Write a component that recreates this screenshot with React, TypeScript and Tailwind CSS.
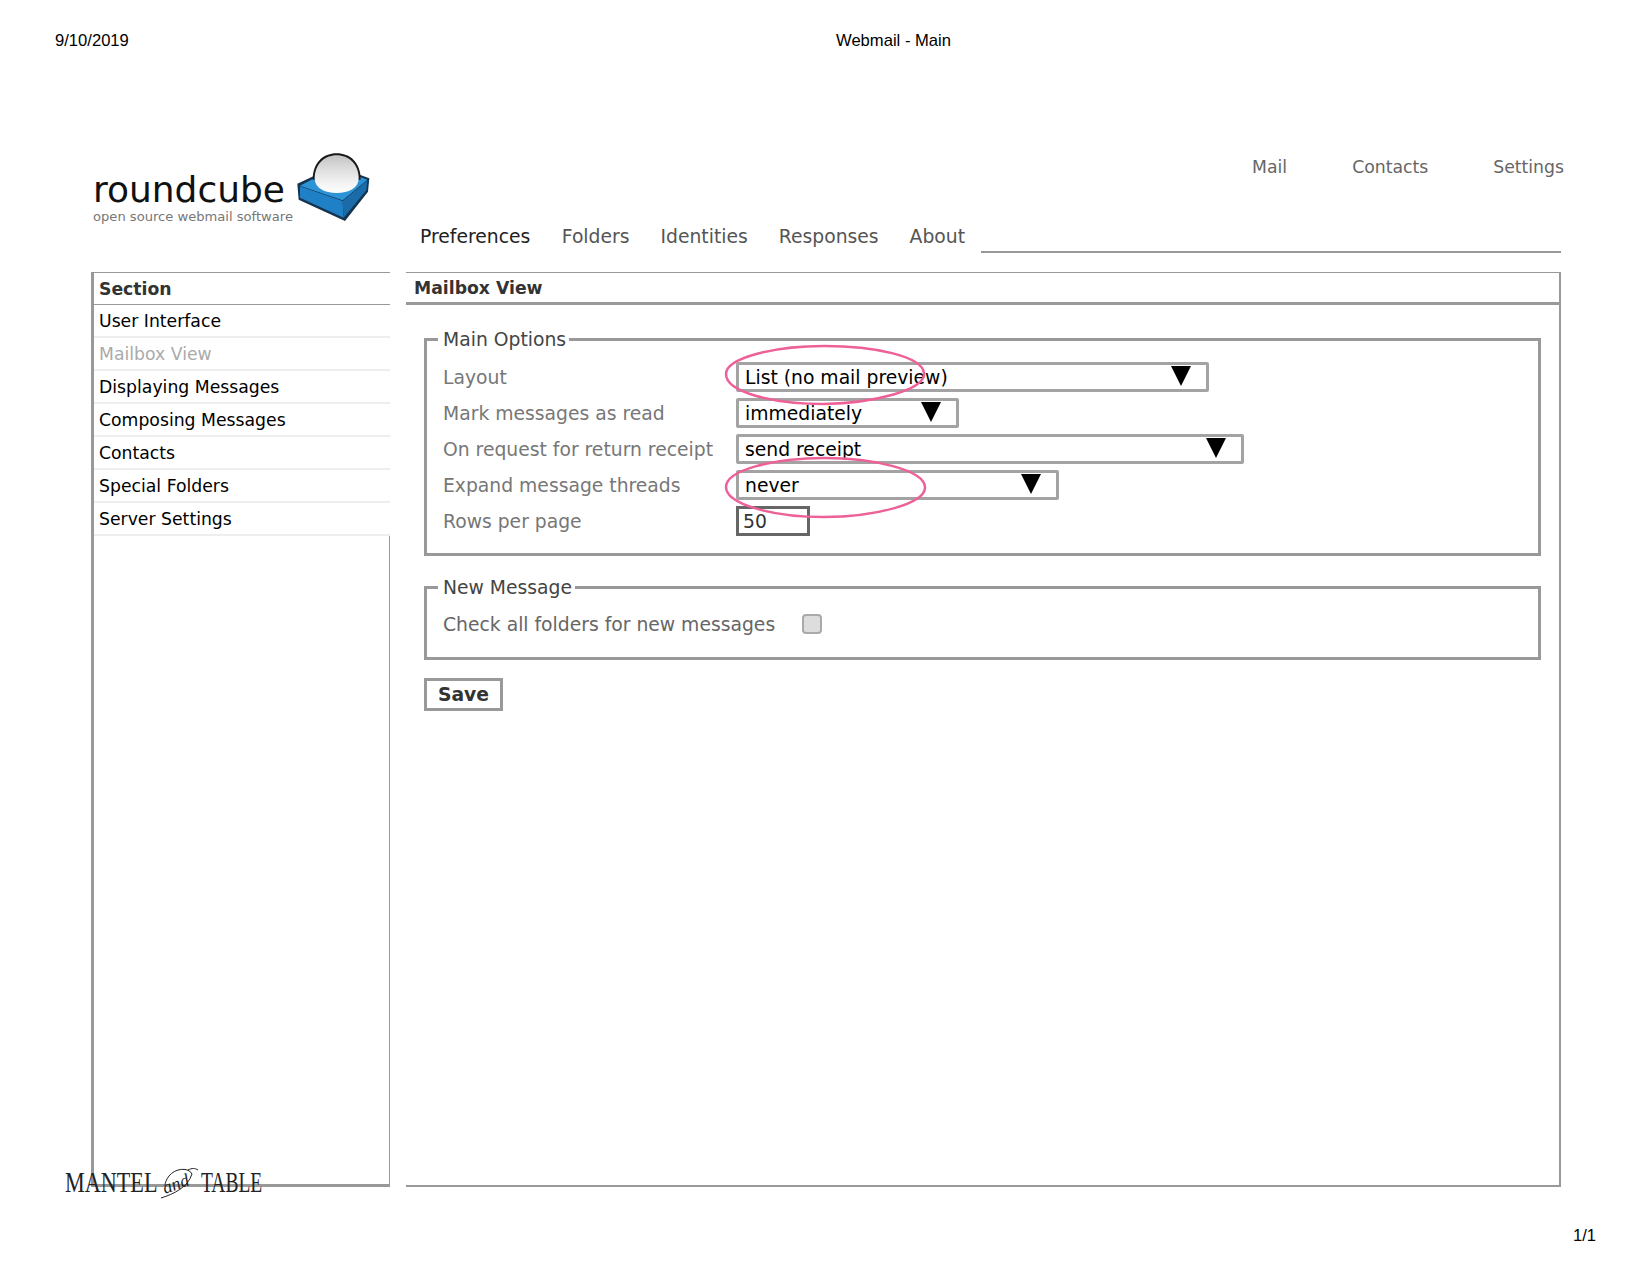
const font = "font-['DejaVu_Sans',sans-serif]";

const sections = [
  { name: "User Interface", muted: false },
  { name: "Mailbox View", muted: true },
  { name: "Displaying Messages", muted: false },
  { name: "Composing Messages", muted: false },
  { name: "Contacts", muted: false },
  { name: "Special Folders", muted: false },
  { name: "Server Settings", muted: false },
];

const tabs = ["Folders", "Identities", "Responses", "About"];

// Roundcube logo: wordmark plus the blue box with the ball
const Logo = () => (
  <svg width="290" height="75" viewBox="0 0 290 75" className="shrink-0">
    <defs>
      <linearGradient id="ball" x1="0" y1="0" x2="0" y2="1">
        <stop offset="0%" stopColor="#c4c4c4" />
        <stop offset="35%" stopColor="#dcdcdc" />
        <stop offset="75%" stopColor="#f4f4f4" />
        <stop offset="100%" stopColor="#fdfdfd" />
      </linearGradient>
    </defs>
    <text x="0" y="53" fontFamily="'DejaVu Sans'" fontSize="36" fill="#111" textLength="192" lengthAdjust="spacingAndGlyphs">
      roundcube
    </text>
    <text x="0" y="72" fontFamily="'DejaVu Sans'" fontSize="12.5" fill="#777" textLength="200" lengthAdjust="spacingAndGlyphs">
      open source webmail software
    </text>
    <g transform="translate(197,0) scale(0.3333)">
      <path d="M22 104 L78 78 L205 76 L238 88 L234 128 L165 216 L26 152 Z" fill="#14344f" />
      <path d="M30 112 L158 156 L161 206 L30 146 Z" fill="#1f80c6" />
      <path d="M158 156 L232 94 L229 124 L161 206 Z" fill="#1a6ba8" />
      <path d="M30 110 L80 84 L205 82 L232 92 L158 154 Z" fill="#2c93d6" />
      <path d="M68 92 C68 40 100 13 140 13 C180 13 212 40 212 92 Z" fill="#1a1a1a" />
      <path d="M74 88 C74 46 104 19 140 19 C176 19 206 46 206 88 C206 118 176 132 140 132 C104 132 74 118 74 88 Z" fill="url(#ball)" />
    </g>
  </svg>
);

// Select drawn as a bordered box with the big black arrow
const SelectBox = ({ value, className }: { value: string; className: string }) => (
  <div className={`flex h-[30px] items-center justify-between rounded-[2px] border-[3px] border-[#a3a3a3] pl-[6px] pr-[15px] text-black ${className}`}>
    <span className="pt-[2px]">{value}</span>
    <svg width="20" height="20" viewBox="0 0 20 20" className="mt-[-2px]">
      <path d="M0 0 H20 L10 20 Z" fill="#000" />
    </svg>
  </div>
);

const Row = ({ label, children }: { label: string; children: React.ReactNode }) => (
  <div className="flex h-9 items-center">
    <div className="w-[293px] shrink-0 pt-[2px] text-[#777]">{label}</div>
    {children}
  </div>
);

const Legend = ({ children }: { children: React.ReactNode }) => (
  <legend className="ml-[-5px] pl-[5px] pr-[3px] leading-[20px] text-[#444]">
    <span className="relative top-[1px]">{children}</span>
  </legend>
);

export default function App() {
  return (
    <div className={`relative h-[1275px] w-[1650px] overflow-hidden bg-white ${font}`}>
      {/* print header */}
      <div className="flex h-[80px] items-start justify-between pl-[55px] pr-[699px] pt-[31px] font-['Liberation_Sans',sans-serif] text-[16.6px] leading-5 text-black">
        <span>9/10/2019</span>
        <span>Webmail - Main</span>
      </div>

      {/* logo + top nav */}
      <div className="flex h-[122px] items-start justify-between pl-[93px] pr-[86px] pt-[69px]">
        <Logo />
        <div className="mt-[8px] flex gap-[65px] text-[17.25px] leading-5 text-[#666]">
          <span>Mail</span>
          <span>Contacts</span>
          <span>Settings</span>
        </div>
      </div>

      <div className="absolute left-[404px] right-[89px] top-[223px] flex h-[30px] items-start text-[18.75px] leading-7 text-[#555]">
        <span className="px-4 text-[#222]">Preferences</span>
        {tabs.map((t) => (
          <span key={t} className="px-[15.5px]">
            {t}
          </span>
        ))}
        <div className="h-full flex-1 border-b-2 border-[#999]" />
      </div>

      {/* body */}
      <div className="absolute left-[91px] top-[272px] flex h-[915px] w-[1470px] gap-[16px]">
        <aside className="flex w-[299px] shrink-0 flex-col border-b-[3px] border-l-[3px] border-t border-[#999] text-[17.25px]">
          <div className="flex h-[32px] items-center border-b border-[#999] pl-[5px] pt-[3px] font-bold text-[#333]">
            Section
          </div>
          {sections.map((s) => (
            <div
              key={s.name}
              className={`flex h-[33px] items-center border-b-2 border-[#eee] pl-[5px] pt-[3px] ${s.muted ? "text-[#aaa]" : "text-black"}`}
            >
              {s.name}
            </div>
          ))}
          <div className="flex-1 border-r border-[#999]" />
        </aside>

        <main className="flex flex-1 flex-col border-b-2 border-r-2 border-t border-[#999]">
          <div className="flex h-[32px] shrink-0 items-center border-b-[3px] border-[#999] pl-[8px] pt-[3px] text-[17.25px] font-bold text-[#333]">
            Mailbox View
          </div>

          <div className="relative pl-[18px] pr-[18px] pt-[24px] text-[18.75px]">
            <fieldset className="h-[227px] border-[3px] border-[#999] pl-[16px]">
              <Legend>Main Options</Legend>
              <div className="pt-[10px]">
                <Row label="Layout">
                  <SelectBox value="List (no mail preview)" className="w-[473px]" />
                </Row>
                <Row label="Mark messages as read">
                  <SelectBox value="immediately" className="w-[223px]" />
                </Row>
                <Row label="On request for return receipt">
                  <SelectBox value="send receipt" className="w-[508px]" />
                </Row>
                <Row label="Expand message threads">
                  <SelectBox value="never" className="w-[323px]" />
                </Row>
                <Row label="Rows per page">
                  <div className="flex h-[30px] w-[74px] items-center border-[3px] border-[#666] pl-1 pt-[2px] text-[#333]">50</div>
                </Row>
              </div>
            </fieldset>

            <fieldset className="mt-[21px] h-[83px] border-[3px] border-[#999] pl-[16px]">
              <Legend>New Message</Legend>
              <div className="flex h-9 items-center pt-[20px]">
                <span className="w-[359px] shrink-0 text-[#666]">Check all folders for new messages</span>
                <span className="-mt-[2px] h-5 w-5 rounded-[4px] border-2 border-[#aaa] bg-[#ddd]" />
              </div>
            </fieldset>

            <button className="mt-[18px] flex h-[33px] w-[79px] items-center justify-center border-[3px] border-[#999] pt-[2px] font-bold text-[#333]">
              Save
            </button>

            {/* pink hand-drawn circles lying over the selects */}
            <svg width="204" height="176" viewBox="0 0 204 176" fill="none" className="pointer-events-none absolute left-[318px] top-[39px]">
              <path d="M2 30 C2 14 50 2 100 2 C150 2 198 12 200 29 C202 46 150 59 100 60 C48 60 2 48 2 30 Z" stroke="#ee6098" strokeWidth="2.5" />
              <path d="M2 143 C2 126 50 114 100 114 C150 114 200 126 201 143 C202 160 150 173 100 173 C48 173 2 160 2 143 Z" stroke="#ee6098" strokeWidth="2.5" />
            </svg>
          </div>
        </main>
      </div>

      {/* print footer */}
      <span className="absolute left-[1573px] top-[1225px] font-['Liberation_Sans',sans-serif] text-[16.5px] leading-5 text-black">1/1</span>

      {/* watermark */}
      <svg width="205" height="36" viewBox="0 0 205 36" className="absolute left-[62px] top-[1165px]">
        <text transform="translate(3,27) scale(0.74,1)" fontFamily="'Liberation Serif'" fontSize="30" fill="#222">MANTEL</text>
        <text transform="translate(103,29) rotate(-20)" fontFamily="'Liberation Serif'" fontStyle="italic" fontSize="18" fill="#222">and</text>
        <path d="M99 33 C112 29 126 22 130 9 C127 2 113 3 107 11 C104 15 103 18 103 21 M126 5 C130 3 133 3 136 5" stroke="#222" strokeWidth="1" fill="none" />
        <text transform="translate(139,27) scale(0.65,1)" fontFamily="'Liberation Serif'" fontSize="30" fill="#222">TABLE</text>
      </svg>
    </div>
  );
}
